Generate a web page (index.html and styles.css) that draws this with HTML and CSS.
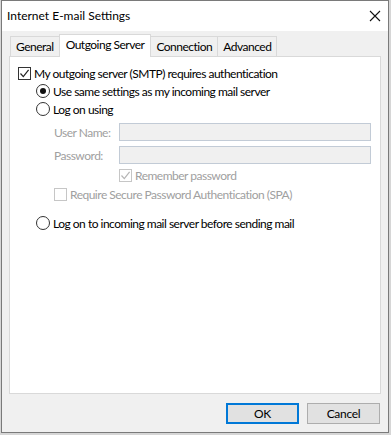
FILE: index.html
```html
<!DOCTYPE html>
<html>
  <head>
    <meta charset="utf-8">
    <title>Internet E-mail Settings</title>
    <link rel="stylesheet" href="styles.css">
  </head>
  <body>
    <div class="window">
      <div class="titlebar">
        <span class="title">Internet E-mail Settings</span>
        <svg class="close" width="12" height="12" viewBox="0 0 12 12">
          <path d="M1 1 L11 11 M11 1 L1 11" stroke="#111" stroke-width="1.1" fill="none"/>
        </svg>
      </div>
      <div class="body">
        <div class="tabs">
          <div class="tab">General</div>
          <div class="tab active">Outgoing Server</div>
          <div class="tab">Connection</div>
          <div class="tab">Advanced</div>
        </div>
        <div class="panel">
          <div class="row">
            <span class="check">
              <svg width="11" height="11" viewBox="0 0 11 11"><path d="M1.5 5.5 L4.3 8.6 L9.6 1.8" stroke="#222" stroke-width="1.2" fill="none"/></svg>
            </span>
            <span>My outgoing server (SMTP) requires authentication</span>
          </div>
          <div class="row indent">
            <span class="radio checked"></span>
            <span>Use same settings as my incoming mail server</span>
          </div>
          <div class="row indent">
            <span class="radio"></span>
            <span>Log on using</span>
          </div>
          <div class="field first">
            <label class="field-label">User Name:</label>
            <div class="input"></div>
          </div>
          <div class="field">
            <label class="field-label">Password:</label>
            <div class="input"></div>
          </div>
          <div class="row disabled remember">
            <span class="check off">
              <svg width="11" height="11" viewBox="0 0 11 11"><path d="M1.5 5.5 L4.3 8.6 L9.6 1.8" stroke="#b5b5b5" stroke-width="1.2" fill="none"/></svg>
            </span>
            <span>Remember password</span>
          </div>
          <div class="row disabled spa">
            <span class="check off"></span>
            <span>Require Secure Password Authentication (SPA)</span>
          </div>
          <div class="row indent last">
            <span class="radio"></span>
            <span>Log on to incoming mail server before sending mail</span>
          </div>
        </div>
        <div class="buttons">
          <button class="button default">OK</button>
          <button class="button">Cancel</button>
        </div>
      </div>
    </div>
  </body>
</html>
```

FILE: styles.css
```css
html, body {
  margin: 0;
  padding: 0;
}

body {
  font-family: Lato, "Liberation Sans", sans-serif;
  font-size: 12px;
  letter-spacing: -0.5px;
  color: #000;
  background: #d6d6d6;
  width: 391px;
  height: 435px;
  overflow: hidden;
}

.window {
  margin-left: 1px;
  width: 386px;
  height: 431px;
  border: 1px solid #7a7a7a;
  background: #f0f0f0;
  display: flex;
  flex-direction: column;
}

.titlebar {
  height: 30px;
  background: #fff;
  display: flex;
  align-items: center;
  justify-content: space-between;
  padding: 0 7px 0 5px;
}

.title {
  font-size: 12px;
  letter-spacing: 0;
  margin-top: -1px;
}

.body {
  flex: 1;
  display: flex;
  flex-direction: column;
  padding: 0 7px;
}

.tabs {
  display: flex;
  align-items: flex-end;
  height: 25px;
  padding-left: 1px;
  position: relative;
  z-index: 1;
}

.tab {
  height: 19px;
  line-height: 19px;
  padding: 0 5px;
  border: 1px solid #d9d9d9;
  border-bottom: none;
  margin-left: -1px;
  background: #f0f0f0;
  color: #000;
  white-space: nowrap;
}

.tab:first-child {
  margin-left: 0;
}

.tab.active {
  height: 22px;
  line-height: 20px;
  background: #fff;
  margin-bottom: -1px;
  padding: 0 6px;
}

.panel {
  height: 338px;
  background: #fff;
  border: 1px solid #d9d9d9;
  padding: 7px 8px 0 8px;
  box-sizing: border-box;
}

.row {
  display: flex;
  align-items: center;
  height: 18px;
  white-space: nowrap;
}

.row.indent {
  padding-left: 18px;
}

.row.remember {
  margin-top: 2px;
  padding-left: 101px;
}

.row.spa {
  margin-top: 1px;
  padding-left: 36px;
}

.row.last {
  margin-top: 11px;
}

.disabled {
  color: #a0a0a0;
}

.check {
  width: 11px;
  height: 11px;
  border: 1px solid #333;
  margin-right: 3px;
  display: flex;
  align-items: center;
  justify-content: center;
  flex-shrink: 0;
}

.check.off {
  border-color: #c6c6c6;
}

.radio {
  width: 12px;
  height: 12px;
  border: 1px solid #333;
  border-radius: 50%;
  margin-right: 3px;
  position: relative;
  flex-shrink: 0;
}

.radio.checked::after {
  content: "";
  position: absolute;
  left: 3px;
  top: 3px;
  width: 6px;
  height: 6px;
  border-radius: 50%;
  background: #111;
}

.field {
  display: flex;
  align-items: center;
  height: 18px;
  margin-top: 5px;
  padding-left: 36px;
}

.field-label {
  width: 65px;
  flex-shrink: 0;
  white-space: nowrap;
  color: #a0a0a0;
}

.input {
  width: 250px;
  height: 16px;
  border: 1px solid #c2cbd6;
  background: #f0f0f0;
}

.buttons {
  display: flex;
  justify-content: flex-end;
  gap: 8px;
  margin-top: 9px;
  padding-right: 1px;
}

.button {
  font-family: inherit;
  font-size: 12px;
  letter-spacing: -0.3px;
  width: 73px;
  height: 21px;
  padding: 0;
  border: 1px solid #adadad;
  background: #e1e1e1;
  color: #000;
}

.button.default {
  border: 2px solid #0078d7;
}
```
